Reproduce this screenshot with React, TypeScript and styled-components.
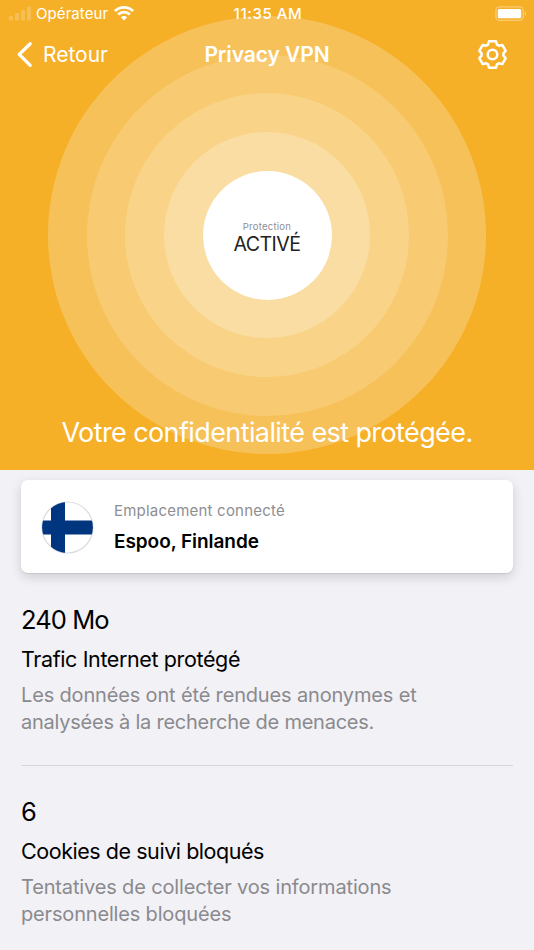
import React from "react";
import styled, { createGlobalStyle } from "styled-components";

const GlobalStyle = createGlobalStyle`
  * { box-sizing: border-box; }
  body {
    margin: 0;
    background: #f2f1f6;
    font-family: Inter, Roboto, sans-serif;
  }
`;

const Screen = styled.main`
  width: 534px;
  height: 950px;
  overflow: hidden;
  background: #f2f1f6;
  color: #000;
`;

const Hero = styled.header`
  position: relative;
  display: flex;
  flex-direction: column;
  height: 470px;
  padding-bottom: 17px;
  background: #f6b028;
  color: #fff;
  overflow: hidden;
`;

const Rings = styled.div`
  position: absolute;
  top: 16px;
  left: 48px;
  display: grid;
  place-items: center;
`;

const Ring = styled.div<{ $size: number; $color: string }>`
  grid-area: 1 / 1;
  width: ${(p) => p.$size}px;
  height: ${(p) => p.$size}px;
  border-radius: 50%;
  background: ${(p) => p.$color};
`;

const Core = styled(Ring)`
  display: flex;
  flex-direction: column;
  align-items: center;
  justify-content: center;
  padding-top: 6px;
`;

const CoreLabel = styled.span`
  font-size: 9.5px;
  line-height: 12px;
  letter-spacing: 0.25px;
  color: #8e8e93;
`;

const CoreState = styled.span`
  font-size: 19.6px;
  line-height: 22px;
  letter-spacing: -0.6px;
  color: #222;
`;

const StatusBar = styled.div`
  position: relative;
  display: grid;
  grid-template-columns: 1fr auto 1fr;
  align-items: center;
  height: 27px;
  padding: 0 7px 0 9px;
  font-size: 15px;
  line-height: 27px;
`;

const Carrier = styled.div`
  display: flex;
  align-items: center;
`;

const CarrierName = styled.span`
  margin: 0 6px 0 4px;
  letter-spacing: 0.08px;
`;

const Clock = styled.span`
  font-weight: 500;
  letter-spacing: 0.6px;
`;

const Battery = styled.div`
  display: flex;
  justify-content: flex-end;
`;

const NavBar = styled.nav`
  position: relative;
  display: grid;
  grid-template-columns: 1fr auto 1fr;
  align-items: center;
  height: 55px;
  padding: 0 26px 0 16px;
  font-size: 21px;
  line-height: 55px;
`;

const BackButton = styled.a`
  display: flex;
  align-items: center;
  gap: 9px;
  letter-spacing: 0;
`;

const Title = styled.h1`
  margin: 0 0 0 10px;
  font-size: 21px;
  font-weight: 600;
  letter-spacing: -0.08px;
`;

const SettingsButton = styled.a`
  display: flex;
  justify-content: flex-end;
`;

const Tagline = styled.p`
  position: relative;
  margin: auto 0 0;
  text-align: center;
  font-size: 27px;
  font-weight: 400;
  line-height: 40px;
  letter-spacing: -0.6px;
`;

const Content = styled.section`
  padding: 10px 21px 0;
`;

const LocationCard = styled.article`
  display: flex;
  align-items: center;
  gap: 20px;
  height: 93px;
  margin-bottom: 31px;
  padding: 1px 20px 0;
  border-radius: 7px;
  background: #fff;
  box-shadow: 0 4px 12px rgba(0, 0, 0, 0.15), 0 1px 1px rgba(0, 0, 0, 0.08);
`;

const LocationText = styled.div`
  display: flex;
  flex-direction: column;
  gap: 9px;
  padding-top: 1px;
`;

const LocationLabel = styled.span`
  font-size: 15px;
  line-height: 20px;
  letter-spacing: 0.21px;
  color: #8e8e92;
`;

const LocationName = styled.strong`
  font-size: 19px;
  font-weight: 600;
  line-height: 24px;
  letter-spacing: -0.06px;
`;

const Stat = styled.article`
  & + & {
    margin-top: 29px;
    padding-top: 30px;
    border-top: 1px solid #d6d6db;
  }
`;

const StatValue = styled.p`
  margin: 0;
  font-size: 25.5px;
  line-height: 32px;
  letter-spacing: -0.92px;
`;

const StatName = styled.h2<{ $tracking: number }>`
  margin: 9px 0;
  font-size: 21.5px;
  font-weight: 400;
  line-height: 28px;
  letter-spacing: ${(p) => p.$tracking}px;
`;

const StatInfo = styled.p`
  margin: 0;
  font-size: 20px;
  line-height: 27px;
`;

const InfoLine = styled.span<{ $tracking: number }>`
  display: block;
  letter-spacing: ${(p) => p.$tracking}px;
  color: #8a8a8e;
`;

const SignalIcon = () => (
  <svg width="23" height="15" viewBox="0 0 23 15" fill="#fff" fillOpacity="0.2">
    <rect x="0" y="10" width="4" height="4.4" rx="1" />
    <rect x="6" y="7" width="4" height="7.4" rx="1" />
    <rect x="12" y="4" width="4" height="10.4" rx="1" />
    <rect x="18" y="0.6" width="4" height="13.8" rx="1" />
  </svg>
);

const WifiIcon = () => (
  <svg width="20" height="15" viewBox="0 0 20 15" fill="none" stroke="#fff">
    <path d="M1 5A13 13 0 0 1 19 5" strokeWidth="2.9" />
    <path d="M4.2 8.4A8.4 8.4 0 0 1 15.8 8.4" strokeWidth="2.8" />
    <path d="M10 14.4L6.9 11.3A4.4 4.4 0 0 1 13.1 11.3Z" fill="#fff" stroke="none" />
  </svg>
);

const BatteryIcon = () => (
  <svg width="32" height="16" viewBox="0 0 32 16">
    <rect x="0.9" y="0.8" width="27.4" height="13.6" rx="3.6" fill="none" stroke="#fff" strokeOpacity="0.35" strokeWidth="1.3" />
    <rect x="2.8" y="2.9" width="23.4" height="9.4" rx="1.6" fill="#fff" />
    <path d="M29.9 5.2C31.5 5.8 31.5 9.4 29.9 10Z" fill="#fff" fillOpacity="0.45" />
  </svg>
);

const BackIcon = () => (
  <svg width="18" height="27" viewBox="0 0 18 27" fill="none" stroke="#fff" strokeWidth="3.3" strokeLinecap="round" strokeLinejoin="round">
    <path d="M14.2 2.7L3.2 13.4L14.2 24.3" />
  </svg>
);

const GearIcon = () => (
  <svg width="31" height="31" viewBox="-15.5 -15.5 31 31" fill="none" stroke="#fff" strokeWidth="2.5" strokeLinejoin="round">
    <path d="M-3.5 -13.2H3.5L4.5 -9.9L6.4 -8.8L9.8 -9.6L13.2 -3.7L10.9 -1.1V1.1L13.2 3.7L9.8 9.6L6.4 8.8L4.5 9.9L3.5 13.2H-3.5L-4.5 9.9L-6.4 8.8L-9.8 9.6L-13.2 3.7L-10.9 1.1V-1.1L-13.2 -3.7L-9.8 -9.6L-6.4 -8.8L-4.5 -9.9Z" />
    <circle r="4.8" />
  </svg>
);

const FinlandFlag = () => (
  <svg width="53" height="53" viewBox="0 0 53 53">
    <defs>
      <clipPath id="flag-disc">
        <circle cx="26.5" cy="26.5" r="25.4" />
      </clipPath>
    </defs>
    <circle cx="26.5" cy="26.5" r="25.5" fill="#fff" stroke="#dcdce0" strokeWidth="1.2" />
    <path clipPath="url(#flag-disc)" fill="#003580" d="M10 0H24V19.4H53V33.6H24V53H10V33.6H0V19.4H10Z" />
  </svg>
);

const rings = [
  { size: 438, color: "#f7c15a" },
  { size: 361, color: "#f8ca71" },
  { size: 284, color: "#f9d488" },
  { size: 206, color: "#fadda2" },
];

const stats = [
  {
    value: "240 Mo",
    name: "Trafic Internet protégé",
    tracking: -0.38,
    info: [
      { text: "Les données ont été rendues anonymes et", tracking: -0.16 },
      { text: "analysées à la recherche de menaces.", tracking: -0.24 },
    ],
  },
  {
    value: "6",
    name: "Cookies de suivi bloqués",
    tracking: -0.45,
    info: [
      { text: "Tentatives de collecter vos informations", tracking: -0.15 },
      { text: "personnelles bloquées", tracking: -0.17 },
    ],
  },
];

export default function App() {
  return (
    <>
      <GlobalStyle />
      <Screen>
        <Hero>
          <Rings>
            {rings.map((ring) => (
              <Ring key={ring.size} $size={ring.size} $color={ring.color} />
            ))}
            <Core $size={129} $color="#fff">
              <CoreLabel>Protection</CoreLabel>
              <CoreState>ACTIVÉ</CoreState>
            </Core>
          </Rings>
          <StatusBar>
            <Carrier>
              <SignalIcon />
              <CarrierName>Opérateur</CarrierName>
              <WifiIcon />
            </Carrier>
            <Clock>11:35 AM</Clock>
            <Battery>
              <BatteryIcon />
            </Battery>
          </StatusBar>
          <NavBar>
            <BackButton>
              <BackIcon />
              Retour
            </BackButton>
            <Title>Privacy VPN</Title>
            <SettingsButton>
              <GearIcon />
            </SettingsButton>
          </NavBar>
          <Tagline>Votre confidentialité est protégée.</Tagline>
        </Hero>
        <Content>
          <LocationCard>
            <FinlandFlag />
            <LocationText>
              <LocationLabel>Emplacement connecté</LocationLabel>
              <LocationName>Espoo, Finlande</LocationName>
            </LocationText>
          </LocationCard>
          {stats.map((stat) => (
            <Stat key={stat.name}>
              <StatValue>{stat.value}</StatValue>
              <StatName $tracking={stat.tracking}>{stat.name}</StatName>
              <StatInfo>
                {stat.info.map((line) => (
                  <InfoLine key={line.text} $tracking={line.tracking}>
                    {line.text}
                  </InfoLine>
                ))}
              </StatInfo>
            </Stat>
          ))}
        </Content>
      </Screen>
    </>
  );
}
